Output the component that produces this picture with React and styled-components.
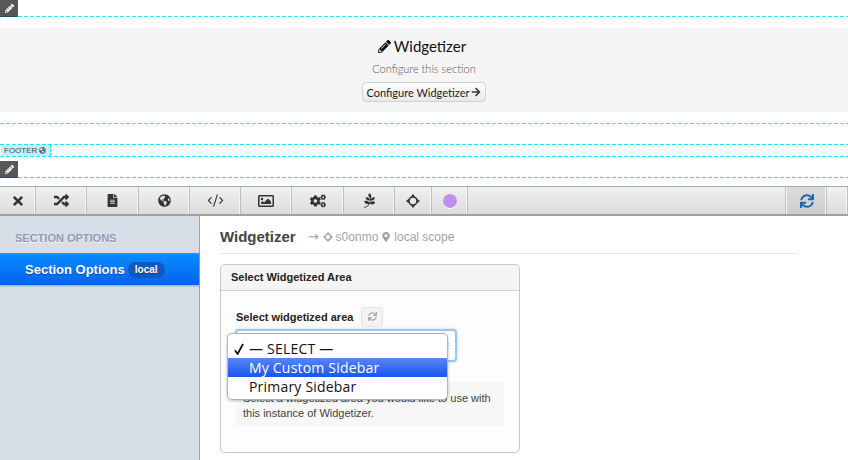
import React from 'react'
import styled, { createGlobalStyle, css } from 'styled-components'
import {
  FaPencilAlt,
  FaTimes,
  FaRandom,
  FaFileAlt,
  FaGlobeAmericas,
  FaRegImage,
  FaCogs,
  FaPagelines,
  FaSync,
  FaArrowRight,
  FaMapMarkerAlt
} from 'react-icons/fa'
import { CodeXml } from 'lucide-react'

const GlobalStyle = createGlobalStyle`
  html, body {
    margin: 0;
    padding: 0;
    background: #fff;
  }
  body {
    font-family: "Liberation Sans", Arial, sans-serif;
    overflow: hidden;
  }
`

// the editor's dashes are longer than what a dashed border gives
const dashes = 'repeating-linear-gradient(90deg, #22e2f6 0 4px, transparent 4px 6px)'

const dashedBottom = css`
  background-image: ${dashes};
  background-size: 100% 1px;
  background-repeat: no-repeat;
  background-position: bottom left;
`

const Page = styled.div`
  width: 848px;
  height: 460px;
  overflow: hidden;
  display: flex;
  flex-direction: column;
`

const DashedRow = styled.div`
  position: relative;
  height: ${(p) => p.$height + 1}px;
  flex: none;
  ${dashedBottom}
`

const EditTab = styled.div`
  position: absolute;
  left: 0;
  bottom: 0;
  width: 18px;
  height: 17px;
  background: rgba(0, 0, 0, 0.66);
  color: #fff;
  display: flex;
  align-items: center;
  justify-content: center;
  font-size: 9px;
`

const WidgetPanel = styled.div`
  flex: none;
  height: 84px;
  margin-top: 11px;
  background: #f5f5f5;
  display: flex;
  flex-direction: column;
  align-items: center;
  font-family: Lato, sans-serif;
`

const WidgetTitle = styled.div`
  margin: 9px 4px 0 0;
  font-size: 15px;
  line-height: 18px;
  color: #111;
  display: flex;
  align-items: center;
  gap: 3px;
  svg {
    font-size: 13px;
  }
`

const WidgetHint = styled.div`
  margin-top: 7px;
  font-size: 11px;
  font-weight: 300;
  line-height: 14px;
  color: #555;
`

const GhostButton = styled.div`
  margin-top: 6px;
  height: 20px;
  width: 124px;
  box-sizing: border-box;
  border: 1px solid #d0d0d0;
  border-radius: 4px;
  background: linear-gradient(#fff, #e8e8e8);
  font-size: 11px;
  color: #222;
  display: flex;
  align-items: center;
  justify-content: center;
  gap: 2px;
  svg {
    font-size: 10px;
    color: #333;
  }
`

const FooterBand = styled.div`
  flex: none;
  height: 13px;
  margin-top: 20px;
  background-color: #f2fcfd;
  background-image: ${dashes}, ${dashes};
  background-size: 100% 1px, 100% 1px;
  background-repeat: no-repeat;
  background-position: top left, bottom left;
  display: flex;
`

const FooterTag = styled.div`
  width: 50px;
  margin: 1px 0 0 1px;
  height: 11px;
  box-sizing: border-box;
  padding-left: 3px;
  background: #c2f0f7;
  border-right: 1px dashed #22e2f6;
  font-size: 8px;
  line-height: 11px;
  color: #3d4f55;
  display: flex;
  align-items: center;
  gap: 2px;
  svg {
    font-size: 7px;
    color: #5b6a70;
  }
`

const Toolbar = styled.div`
  flex: none;
  height: 27px;
  margin-top: 8px;
  border-top: 1px solid #aaa;
  border-bottom: 2px solid #a0a0a0;
  background: linear-gradient(#f0f0f0, #dcdcdc);
  display: flex;
`

const ToolButton = styled.div`
  flex: none;
  width: ${(p) => p.$width}px;
  box-sizing: border-box;
  border-right: 1px solid #bfbfbf;
  box-shadow: inset -1px 0 0 #f4f4f4;
  color: ${(p) => p.$color || '#333'};
  font-size: 13px;
  display: flex;
  align-items: center;
  justify-content: center;
  background: ${(p) => (p.$active ? 'linear-gradient(#dcdcdc, #cdcdcd)' : 'transparent')};
  border-left: ${(p) => (p.$active ? '1px solid #f4f4f4' : '0')};
`

const ToolSpacer = styled.div`
  flex: 1;
  border-right: 1px solid #bfbfbf;
`

const Dot = styled.span`
  width: 14px;
  height: 14px;
  border-radius: 50%;
  background: #c08fea;
  box-shadow: 0 1px 0 #fff;
`

const Body = styled.div`
  flex: 1;
  display: flex;
  min-height: 0;
`

const Sidebar = styled.div`
  flex: none;
  width: 200px;
  box-sizing: border-box;
  background: #d8dee8;
  border-right: 1px solid #98a3b6;
  padding-top: 15px;
`

const SideHeading = styled.div`
  padding-left: 15px;
  font-size: 11px;
  font-weight: 700;
  line-height: 14px;
  color: #8f9bb0;
  text-shadow: 0 1px 0 #f0f3f7;
`

const SideItem = styled.div`
  margin-top: 8px;
  height: 32px;
  box-sizing: border-box;
  border-top: 1px solid #1e9bff;
  background: linear-gradient(#0a8bff, #0562f0);
  box-shadow: 0 1px 2px rgba(60, 70, 90, 0.4);
  padding-left: 25px;
  display: flex;
  align-items: center;
  gap: 3px;
  color: #fff;
  font-size: 13px;
  font-weight: 700;
  text-shadow: 0 1px 1px rgba(0, 0, 0, 0.3);
`

const LocalBadge = styled.span`
  width: 37px;
  height: 16px;
  border-radius: 8px;
  background: #0d5bc0;
  font-size: 10px;
  line-height: 16px;
  text-align: center;
`

const Main = styled.div`
  flex: 1;
  padding: 13px 50px 0 20px;
  min-width: 0;
`

const TitleRow = styled.div`
  height: 24px;
  border-bottom: 1px solid #e6e6e6;
  display: flex;
  align-items: flex-start;
  gap: 12px;
  line-height: 16px;
`

const PageTitle = styled.div`
  font-size: 15px;
  font-weight: 700;
  color: #444;
`

const Crumbs = styled.div`
  font-size: 12px;
  color: #a2a2a2;
  display: flex;
  align-items: center;
  gap: 3px;
  height: 16px;
  svg {
    font-size: 10px;
  }
`

const CrumbArrow = styled.span`
  font-family: "DejaVu Sans", sans-serif;
  font-size: 13px;
  margin-right: 1px;
`

const Card = styled.div`
  position: relative;
  margin-top: 10px;
  width: 300px;
  height: 189px;
  box-sizing: border-box;
  border: 1px solid #c8c8c8;
  border-radius: 5px;
  background: #fdfdfd;
`

const CardHeader = styled.div`
  height: 26px;
  box-sizing: border-box;
  padding-left: 10px;
  background: #f5f5f5;
  border-bottom: 1px solid #d2d2d2;
  border-radius: 5px 5px 0 0;
  font-size: 11px;
  font-weight: 700;
  line-height: 25px;
  color: #222;
`

const CardBody = styled.div`
  padding: 15px 15px 0;
`

const FieldLabel = styled.div`
  display: flex;
  align-items: center;
  gap: 8px;
  height: 21px;
  font-size: 11px;
  font-weight: 700;
  color: #222;
`

const SmallRefresh = styled.span`
  width: 22px;
  height: 20px;
  box-sizing: border-box;
  border: 1px solid #e2e2e2;
  border-radius: 3px;
  background: #f4f4f4;
  color: #a8a8a8;
  font-size: 9px;
  display: flex;
  align-items: center;
  justify-content: center;
`

const SelectBox = styled.div`
  margin: 2px 0 0 -1px;
  width: 222px;
  height: 33px;
  box-sizing: border-box;
  border: 2px solid #9cc6ee;
  border-radius: 4px;
  background: #fff;
  box-shadow: 0 0 3px #a9cff2;
  display: flex;
  align-items: center;
  justify-content: flex-end;
  padding-right: 3px;
  color: #999;
  font-size: 8px;
`

const HelpText = styled.div`
  margin-top: 20px;
  width: 268px;
  height: 44px;
  box-sizing: border-box;
  padding: 9px 7px;
  background: #f7f7f7;
  font-size: 11px;
  line-height: 15px;
  color: #444;
`

const SelectMenu = styled.div`
  position: absolute;
  left: 6px;
  top: 68px;
  width: 221px;
  height: 67px;
  box-sizing: border-box;
  padding-top: 5px;
  background: #fff;
  border: 1px solid #b5b5b5;
  border-radius: 5px;
  box-shadow: 0 1px 3px rgba(0, 0, 0, 0.25);
  font-family: "Open Sans", "Noto Sans", sans-serif;
  font-size: 14px;
  letter-spacing: 0.2px;
  color: #111;
`

const MenuOption = styled.div`
  position: relative;
  height: 19px;
  line-height: 19px;
  padding-left: 21px;
  white-space: nowrap;
  color: ${(p) => (p.$hot ? '#fff' : '#111')};
  background: ${(p) => (p.$hot ? 'linear-gradient(#5a86f2, #1a55ef)' : 'transparent')};
  svg {
    position: absolute;
    left: 6px;
    top: 4px;
  }
`

// ring with four arrow heads, used on the toolbar and in the breadcrumb
const Target = ({ size }) => (
  <svg width={size} height={size} viewBox="0 0 14 14" fill="none">
    <circle cx="7" cy="7" r="4" stroke="currentColor" strokeWidth="1.6" />
    <path d="M7 0 9.3 2.8H4.7zM7 14 4.7 11.2h4.6zM0 7 2.8 4.7v4.6zM14 7 11.2 9.3V4.7z" fill="currentColor" />
  </svg>
)

const MenuCheck = () => (
  <svg width="10" height="12" viewBox="0 0 10 12" fill="none">
    <path d="M1 7.2 3.6 11 9 1" stroke="#111" strokeWidth="1.8" />
  </svg>
)

const tools = [
  { width: 36, icon: <FaTimes size={14} /> },
  { width: 51, icon: <FaRandom size={15} /> },
  { width: 52, icon: <FaFileAlt /> },
  { width: 51, icon: <FaGlobeAmericas /> },
  { width: 51, icon: <CodeXml size={17} strokeWidth={1.6} /> },
  { width: 51, icon: <FaRegImage size={16} /> },
  { width: 52, icon: <FaCogs size={16} /> },
  { width: 51, icon: <FaPagelines size={15} /> },
  { width: 37, icon: <Target size={14} /> },
  { width: 36, icon: <Dot /> }
]

export default function App() {
  return (
    <Page>
      <GlobalStyle />
      <DashedRow $height={16}>
        <EditTab><FaPencilAlt /></EditTab>
      </DashedRow>

      <WidgetPanel>
        <WidgetTitle><FaPencilAlt />Widgetizer</WidgetTitle>
        <WidgetHint>Configure this section</WidgetHint>
        <GhostButton>Configure Widgetizer<FaArrowRight /></GhostButton>
      </WidgetPanel>

      <DashedRow $height={11} />

      <FooterBand>
        <FooterTag>FOOTER<FaGlobeAmericas /></FooterTag>
      </FooterBand>

      <DashedRow $height={20}>
        <EditTab><FaPencilAlt /></EditTab>
      </DashedRow>

      <Toolbar>
        {tools.map((tool, index) => (
          <ToolButton key={index} $width={tool.width}>{tool.icon}</ToolButton>
        ))}
        <ToolSpacer />
        <ToolButton $width={41} $active $color="#1f66ae">
          <FaSync size={14} />
        </ToolButton>
        <ToolButton $width={21} />
      </Toolbar>

      <Body>
        <Sidebar>
          <SideHeading>SECTION OPTIONS</SideHeading>
          <SideItem>
            Section Options
            <LocalBadge>local</LocalBadge>
          </SideItem>
        </Sidebar>

        <Main>
          <TitleRow>
            <PageTitle>Widgetizer</PageTitle>
            <Crumbs>
              <CrumbArrow>→</CrumbArrow>
              <Target size={10} /> s0onmo <FaMapMarkerAlt /> local scope
            </Crumbs>
          </TitleRow>

          <Card>
            <CardHeader>Select Widgetized Area</CardHeader>
            <CardBody>
              <FieldLabel>
                Select widgetized area
                <SmallRefresh><FaSync /></SmallRefresh>
              </FieldLabel>
              <SelectBox>⋮</SelectBox>
              <HelpText>Select a widgetized area you would like to use with this instance of Widgetizer.</HelpText>
            </CardBody>
            <SelectMenu>
              <MenuOption><MenuCheck />— SELECT —</MenuOption>
              <MenuOption $hot>My Custom Sidebar</MenuOption>
              <MenuOption>Primary Sidebar</MenuOption>
            </SelectMenu>
          </Card>
        </Main>
      </Body>
    </Page>
  )
}
